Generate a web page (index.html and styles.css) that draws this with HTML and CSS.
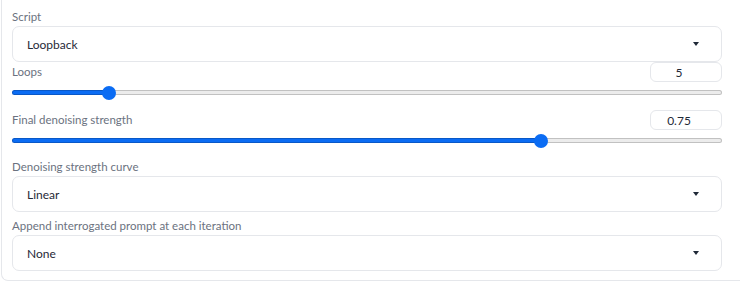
FILE: index.html
```html
<!DOCTYPE html>
<html lang="en">
<head>
    <meta charset="UTF-8">
    <title>Loopback script</title>
    <link rel="stylesheet" href="styles.css">
</head>
<body>
    <div class="panel">
        <div class="field field-first">
            <label class="field-label">Script</label>
            <div class="dropdown">
                <span>Loopback</span>
                <span class="caret"></span>
            </div>
        </div>

        <div class="field slider-field">
            <div class="slider-head">
                <label class="field-label">Loops</label>
                <input class="num-input" type="text" value="5">
            </div>
            <input class="range" type="range" min="1" max="32" value="5" style="--pct: 12.9%">
        </div>

        <div class="field slider-field slider-second">
            <div class="slider-head">
                <label class="field-label">Final denoising strength</label>
                <input class="num-input" type="text" value="0.75">
            </div>
            <input class="range" type="range" min="0" max="1" step="0.01" value="0.75" style="--pct: 75%">
        </div>

        <div class="field field-curve">
            <label class="field-label">Denoising strength curve</label>
            <div class="dropdown">
                <span>Linear</span>
                <span class="caret"></span>
            </div>
        </div>

        <div class="field field-append">
            <label class="field-label">Append interrogated prompt at each iteration</label>
            <div class="dropdown">
                <span>None</span>
                <span class="caret"></span>
            </div>
        </div>
    </div>
</body>
</html>
```

FILE: styles.css
```css
* {
    margin: 0;
    padding: 0;
    box-sizing: border-box;
}

body {
    font-family: 'Lato', 'Liberation Sans', sans-serif;
    font-size: 12px;
    color: #1f2937;
    background: #ffffff;
}

/* Outer block, its top is cut off above the view */
.panel {
    margin-left: 1px;
    border-left: 1px solid #e5e7eb;
    border-bottom: 1px solid #e5e7eb;
    border-bottom-left-radius: 7px;
    padding: 9px 18px 8px 10px;
    height: 281px;
}

.field {
    display: flex;
    flex-direction: column;
}

.field-label {
    display: block;
    color: #6b7280;
    font-size: 11.5px;
    line-height: 16px;
    height: 16px;
}

.field-first .field-label {
    margin-bottom: 1px;
}

.field-curve {
    margin-top: 9px;
}

.field-curve .field-label,
.field-append .field-label {
    margin-bottom: 1px;
}

.field-append {
    margin-top: 6px;
}

/* Dropdowns */
.dropdown {
    height: 36px;
    border: 1px solid #e5e7eb;
    border-radius: 7px;
    background: #ffffff;
    display: flex;
    align-items: center;
    justify-content: space-between;
    padding: 0 22px 0 14px;
    color: #1f2937;
}

.caret {
    width: 0;
    height: 0;
    border-left: 3.5px solid transparent;
    border-right: 3.5px solid transparent;
    border-top: 4px solid #1f2937;
}

/* Sliders */
.slider-head {
    display: flex;
    justify-content: space-between;
    align-items: center;
    height: 20px;
}

.slider-second {
    margin-top: 8px;
}

.num-input {
    width: 72px;
    height: 20px;
    border: 1px solid #e5e7eb;
    border-radius: 6px;
    font-family: inherit;
    font-size: 12px;
    color: #1f2937;
    text-align: center;
    padding-right: 14px;
    outline: none;
    background: #ffffff;
}

.range {
    -webkit-appearance: none;
    appearance: none;
    width: 100%;
    height: 5px;
    margin: 8px 0 7px;
    border-radius: 3px;
    background: linear-gradient(to right, #0b6cf3 var(--pct), #ececec var(--pct));
    box-shadow: inset 0 0 0 1px rgba(0, 0, 0, 0.18);
    outline: none;
}

.range::-webkit-slider-thumb {
    -webkit-appearance: none;
    width: 14px;
    height: 14px;
    border-radius: 50%;
    background: #0b6cf3;
    border: none;
}
```
